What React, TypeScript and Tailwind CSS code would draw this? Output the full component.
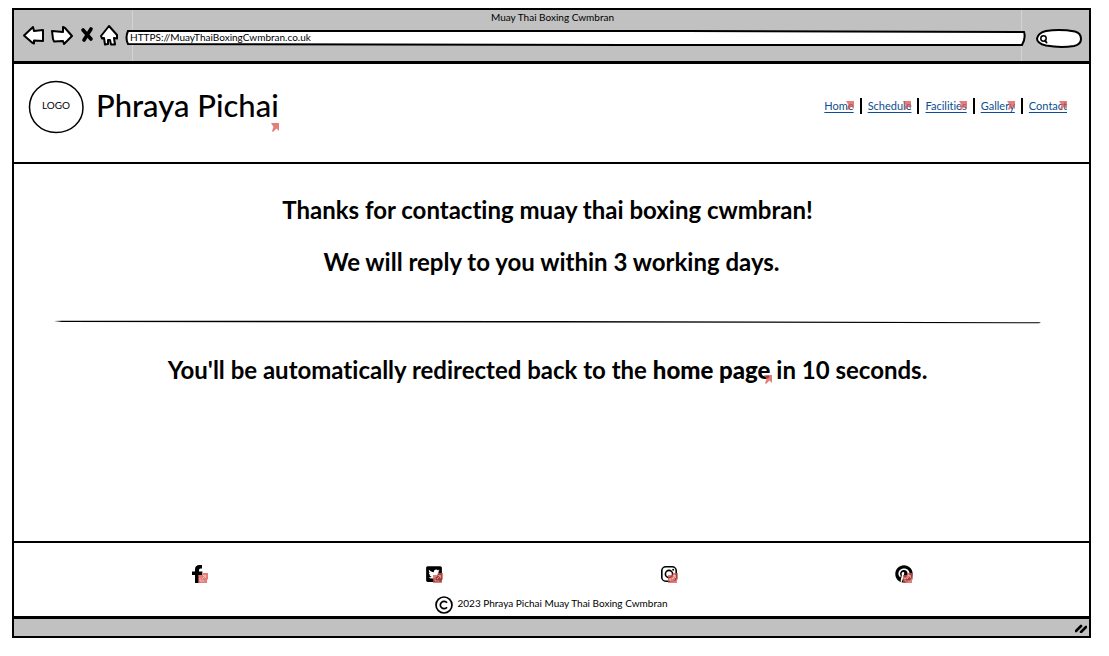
import React from "react";
import { FaTwitterSquare, FaPinterest } from "react-icons/fa";

function LinkMark({ className }: { className: string }) {
  return (
    <svg
      viewBox="0 0 8 9"
      aria-hidden="true"
      className={`pointer-events-none absolute h-[9px] w-2 ${className}`}
    >
      <path d="M0 0H8V8L5.500 5.500L2 9L1 8L2.500 4Z" fill="#d9534f" fillOpacity="0.75" />
    </svg>
  );
}

function ExternalMark() {
  return (
    <svg
      viewBox="0 0 10 10"
      aria-hidden="true"
      className="pointer-events-none absolute right-0 bottom-0 size-2.5"
    >
      <path d="M0 2H4L5 0H10V6L9 7V10H0Z" fill="#d9534f" fillOpacity="0.75" />
      <path d="M4 6L7 3M5 2.500H7.500V5M2 5V8H6.500" stroke="#fff" strokeOpacity="0.45" fill="none" />
    </svg>
  );
}

type ToolProps = { label: string; className: string; viewBox: string; path: string; bold?: boolean };

function Tool({ label, className, viewBox, path, bold }: ToolProps) {
  return (
    <button type="button" aria-label={label} className={`h-5 shrink-0 ${className}`}>
      <svg viewBox={viewBox} className="size-full overflow-visible">
        <path
          d={path}
          fill={bold ? "none" : "#fff"}
          stroke="#000"
          strokeWidth={bold ? 3.6 : 2}
          strokeLinejoin="round"
          strokeLinecap="round"
        />
      </svg>
    </button>
  );
}

function BrowserBar() {
  return (
    <div className="relative h-[51px] bg-[#c1c1c1] pr-[7px] pl-[9px]">
      <div className="pointer-events-none absolute inset-y-0 left-[118px] w-px bg-white/30" />
      <div className="pointer-events-none absolute inset-y-0 right-[67px] w-px bg-white/30" />
      <p className="h-[15px] text-center text-[10px] leading-[15px]">Muay Thai Boxing Cwmbran</p>
      <div className="flex h-5 items-center">
        <Tool label="Back" className="mr-1.5 w-[22px]" viewBox="0 0 22 20" path="M1 10.500L10 2L11 6L20 5V16L11 15.500V18.500L9 17.500Z" />
        <Tool label="Forward" className="mr-2 w-[22px]" viewBox="0 0 22 20" path="M1 6L12 7V2L14 3L21 11L13 19L12 16L3 16.500L2 14Z" />
        <Tool label="Stop" className="mr-2 w-3" viewBox="0 0 12 20" bold path="M2 5L10 14M10 4L3 15" />
        <Tool label="Home" className="mr-2 w-4" viewBox="0 0 16 20" path="M8 1L0 11L1 13.500L3 13L4 19.500L7 19V15H9L10 19.500H14L13 13L16 13.500V10Z" />
        <div className="relative mt-1.5 h-4 flex-1">
          <svg viewBox="0 0 900 16" preserveAspectRatio="none" aria-hidden="true" className="absolute inset-0 size-full">
            <path
              d="M3 1Q300 0 560 1L898 2Q900 8 896 15L500 15L3 14Q0 8 3 1Z"
              fill="#fff"
              stroke="#000"
              strokeWidth="2"
              vectorEffect="non-scaling-stroke"
            />
          </svg>
          <input
            aria-label="Address"
            defaultValue="HTTPS://MuayThaiBoxingCwmbran.co.uk"
            className="relative block h-[14px] w-full bg-transparent px-[5px] text-[10px] leading-[14px] outline-none"
          />
        </div>
        <label className="relative mt-1.5 ml-2.5 h-[19px] w-[46px]">
          <svg viewBox="0 0 46 19" aria-hidden="true" className="absolute inset-0 size-full">
            <path d="M10 2Q24 0 39 2.500Q45 4 45 10Q45 15.500 38 17Q24 19 10 16.500Q1 14.500 1 9.500Q2 4 10 2Z" fill="#fff" stroke="#000" strokeWidth="2" />
            <circle cx="7.500" cy="9.500" r="2.700" fill="none" stroke="#000" strokeWidth="1.500" />
            <path d="M9 11.500L10.500 13.500" stroke="#000" strokeWidth="2" strokeLinecap="round" />
          </svg>
          <input aria-label="Search" type="text" className="relative block h-full w-full bg-transparent pr-2 pl-3 text-[10px] outline-none" />
        </label>
      </div>
    </div>
  );
}

const pages = ["Home", "Schedule", "Facilities", "Gallery", "Contact"];

function SiteHeader() {
  return (
    <header className="flex h-[100px] items-start justify-between border-b-2 border-black pr-[22px] pl-3.5">
      <div className="flex items-center gap-3 pt-4">
        <div className="relative flex h-[54px] w-14 items-center justify-center text-[10px]">
          <svg viewBox="0 0 56 54" aria-hidden="true" className="absolute inset-0 size-full">
            <path d="M28 1.500C43 1.500 55 13 55 27.500C55 42 43 52.500 28 52.500C13 52.500 1.500 41 1.500 27C1.500 13 13 1.500 28 1.500Z" fill="none" stroke="#000" strokeWidth="1.5" />
          </svg>
          <span className="relative pb-1">LOGO</span>
        </div>
        <a href="#home" className="relative pb-1 text-[31px] leading-[50px] font-medium">
          Phraya Pichai
          <LinkMark className="right-0 bottom-0.5" />
        </a>
      </div>
      <nav className="flex items-center pt-[34px] text-[11px] leading-4">
        {pages.map((page, i) => (
          <React.Fragment key={page}>
            {i > 0 && <span className="mx-1.5 h-4 w-0.5 bg-black" />}
            <a href={`#${page.toLowerCase()}`} className="relative text-[#0b4f91] underline underline-offset-2">
              {page}
              <LinkMark className="top-[3px] right-0" />
            </a>
          </React.Fragment>
        ))}
      </nav>
    </header>
  );
}

function FacebookIcon({ className }: { className: string }) {
  return (
    <svg viewBox="0 0 18 18" aria-hidden="true" className={className}>
      <path d="M5 18V10H2V6.500H5V4.500Q5 0 9.500 0H12V3.500H10.500Q9 3.500 9 5V6.500H12.500L12 10H9V18Z" />
    </svg>
  );
}

function InstagramIcon({ className }: { className: string }) {
  return (
    <svg viewBox="0 0 18 18" aria-hidden="true" className={className}>
      <rect x="1.800" y="1.800" width="14.400" height="14.400" rx="4" fill="none" stroke="#000" strokeWidth="1.600" />
      <circle cx="9" cy="9" r="3.600" fill="none" stroke="#000" strokeWidth="1.600" />
      <circle cx="13.200" cy="4.800" r="1" />
    </svg>
  );
}

const socials = [
  { name: "Facebook", Icon: FacebookIcon },
  { name: "Twitter", Icon: FaTwitterSquare },
  { name: "Instagram", Icon: InstagramIcon },
  { name: "Pinterest", Icon: FaPinterest },
];

function SiteFooter() {
  return (
    <footer className="h-[75px] border-t-2 border-black">
      <div className="grid grid-cols-4 px-[68px] pt-[22px]">
        {socials.map(({ name, Icon }) => (
          <a key={name} href={`#${name.toLowerCase()}`} aria-label={name} className="relative justify-self-center">
            <Icon className="size-[18px]" />
            <ExternalMark />
          </a>
        ))}
      </div>
      <p className="flex items-center justify-center gap-1 pt-3 text-[10px] leading-4">
        <svg viewBox="0 0 18 18" aria-hidden="true" className="size-[18px]">
          <circle cx="9" cy="9" r="8" fill="none" stroke="#000" strokeWidth="1.7" />
          <path d="M12 6.800A3.700 3.700 0 1 0 12 11.200" fill="none" stroke="#000" strokeWidth="1.7" />
        </svg>
        <span className="pb-1">2023 Phraya Pichai Muay Thai Boxing Cwmbran</span>
      </p>
    </footer>
  );
}

export default function App() {
  return (
    <div className="flex min-h-screen flex-col bg-white pt-2 pr-[18px] pb-[18px] pl-3 font-['Lato',sans-serif] text-black [font-variant-ligatures:none]">
      <div className="flex flex-1 flex-col border-2 border-black">
        <BrowserBar />
        <div className="flex flex-1 flex-col border-t-[3px] border-black">
          <SiteHeader />
          <main className="flex-1 text-center text-2xl leading-8 font-bold">
            <h1 className="pt-[30px] pr-2">Thanks for contacting muay thai boxing cwmbran!</h1>
            <p className="pt-5">We will reply to you within 3 working days.</p>
            <svg viewBox="0 0 986 4" preserveAspectRatio="none" aria-hidden="true" className="mt-[42px] ml-10 h-1 w-[calc(100%-88px)]">
              <path d="M0 1L8 .7L500 1L986 2.200L984 3.200L500 2.500L8 2Z" />
            </svg>
            <p className="pt-[30px] pr-2">
              You'll be automatically redirected back to the{" "}
              <a href="#home" className="relative font-black">
                home page
                <LinkMark className="-right-0.5 bottom-0" />
              </a>{" "}
              in 10 seconds.
            </p>
          </main>
          <SiteFooter />
        </div>
        <div className="flex h-5 items-center justify-end border-t-[3px] border-black bg-[#c1c1c1] pr-0.5">
          <svg viewBox="0 0 12 10" aria-hidden="true" className="h-2.5 w-3">
            <path d="M1 8L6 3M6 9L11 4" stroke="#000" strokeWidth="2.600" strokeLinecap="round" />
          </svg>
        </div>
      </div>
    </div>
  );
}
